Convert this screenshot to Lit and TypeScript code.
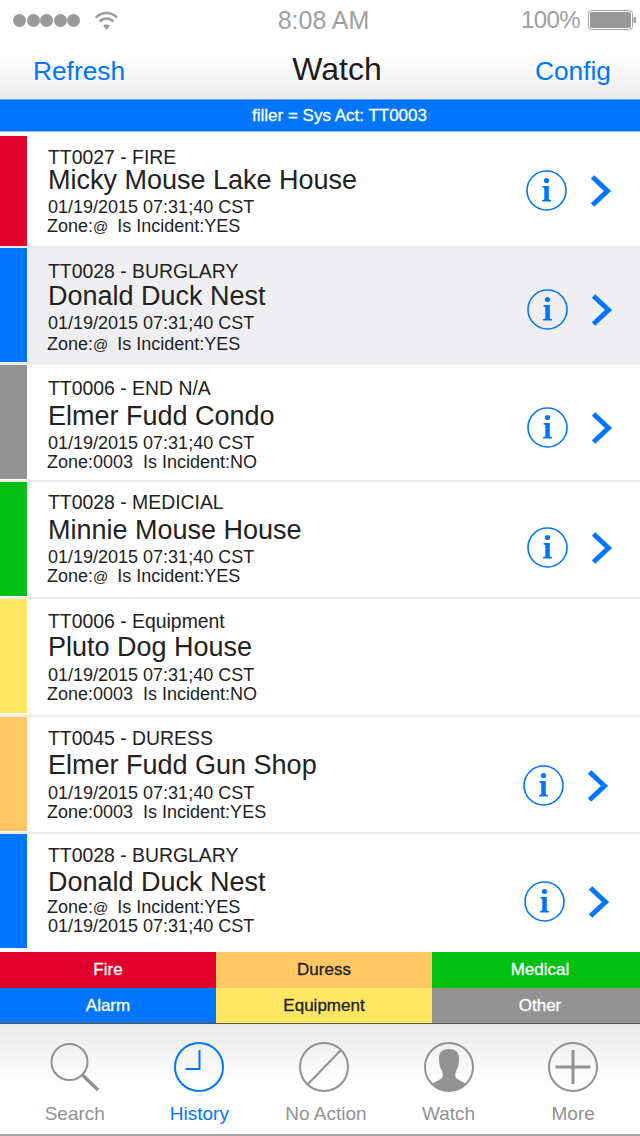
import { LitElement, css, html, nothing, svg } from 'lit';
import { customElement } from 'lit/decorators.js';

interface Ticket {
  color: string;
  height: number;
  head: string;
  name: string;
  lines: string[];
  // vertical centre of each text line, measured from the top of the row
  ys: number[];
  iconX?: number;
  iconY?: number;
  barTop?: number;
  barBottom?: number;
  shade?: boolean;
}

const STAMP = '01/19/2015 07:31;40 CST';
const SMALL_LINE = 18;
const NAME_LINE = 26;
const TEXT_RIGHT = 479;

const TICKETS: Ticket[] = [
  { color: '#e0002b', height: 116, barTop: 4, barBottom: 0, head: 'TT0027 - FIRE', name: 'Micky Mouse Lake House', lines: [STAMP, 'Zone:@  Is Incident:YES'], ys: [25, 48, 75, 94], iconX: 526, iconY: 38 },
  { color: '#0076ff', height: 117, head: 'TT0028 - BURGLARY', name: 'Donald Duck Nest', lines: [STAMP, 'Zone:@  Is Incident:YES'], ys: [23, 48, 75, 96], iconX: 527, iconY: 41, shade: true },
  { color: '#939393', height: 117, head: 'TT0006 - END N/A', name: 'Elmer Fudd Condo', lines: [STAMP, 'Zone:0003  Is Incident:NO'], ys: [23, 51, 78, 97], iconX: 527, iconY: 42 },
  { color: '#00bf13', height: 117, head: 'TT0028 - MEDICIAL', name: 'Minnie Mouse House', lines: [STAMP, 'Zone:@  Is Incident:YES'], ys: [20, 48, 75, 94], iconX: 527, iconY: 45 },
  { color: '#ffe763', height: 118, barBottom: 2, head: 'TT0006 - Equipment', name: 'Pluto Dog House', lines: [STAMP, 'Zone:0003  Is Incident:NO'], ys: [22, 48, 76, 95] },
  { color: '#ffc764', height: 117, head: 'TT0045 - DURESS', name: 'Elmer Fudd Gun Shop', lines: [STAMP, 'Zone:0003  Is Incident:YES'], ys: [21, 48, 76, 95], iconX: 523, iconY: 48 },
  { color: '#0076ff', height: 118, barBottom: 4, head: 'TT0028 - BURGLARY', name: 'Donald Duck Nest', lines: ['Zone:@  Is Incident:YES', STAMP], ys: [21, 48, 73, 92], iconX: 524, iconY: 47 },
];

const LEGEND = [
  { label: 'Fire', bg: '#e0002b', fg: '#fff' },
  { label: 'Duress', bg: '#ffc764', fg: '#222' },
  { label: 'Medical', bg: '#00bf13', fg: '#fff' },
  { label: 'Alarm', bg: '#0076ff', fg: '#fff' },
  { label: 'Equipment', bg: '#ffe763', fg: '#222' },
  { label: 'Other', bg: '#939393', fg: '#fff' },
];

const TAB_ICONS = {
  search: svg`<circle cx="19.5" cy="20" r="18" /><path d="M32.5 33 L48 48" stroke-width="3.5" />`,
  clock: svg`<circle cx="25" cy="25" r="24" /><path d="M25.5 8 V27 H11.5" />`,
  ban: svg`<circle cx="25" cy="25" r="24" /><path d="M9 42 L42 8" />`,
  person: svg`<circle cx="25" cy="25" r="24" />
    <path fill="currentColor" stroke="none" d="M25 7 C31 7 35 10 35 16 C35 22 34 26 32 29 C31 32 31 34 32 36 C34 38 38 39 42 42 C38 47 32 49 25 49 C18 49 12 47 8 42 C12 39 16 38 18 36 C19 34 19 32 18 29 C16 26 15 22 15 16 C15 10 19 7 25 7 Z" />`,
  plus: svg`<circle cx="25" cy="25" r="24" /><path d="M25 8 V42 M7.5 25 H42.5" stroke-width="3" />`,
};

const TABS: { label: string; icon: keyof typeof TAB_ICONS; active?: boolean; nudge?: boolean }[] = [
  { label: 'Search', icon: 'search' },
  { label: 'History', icon: 'clock', active: true },
  { label: 'No Action', icon: 'ban', nudge: true },
  { label: 'Watch', icon: 'person' },
  { label: 'More', icon: 'plus' },
];

@customElement('app-root')
export class AppRoot extends LitElement {
  static styles = css`
    :host {
      display: block;
      width: 640px;
      height: 1136px;
      overflow: hidden;
      background: #fff;
      font-family: 'Liberation Sans', Arial, sans-serif;
      color: #222;
    }
    .top {
      height: 99px;
      background: linear-gradient(#fff 0, #fff 58px, #ebebeb 98px);
      display: flex;
      flex-direction: column;
    }
    .status {
      height: 40px;
      display: grid;
      grid-template-columns: 1fr auto 1fr;
      align-items: center;
      color: #a0a0a0;
      font-size: 25px;
    }
    .signal {
      display: flex;
      align-items: center;
      gap: 0.5px;
      padding-left: 13px;
    }
    .dot {
      width: 13px;
      height: 13px;
      border-radius: 50%;
      background: #999;
    }
    .wifi {
      margin-left: 14px;
    }
    .clock {
      margin-left: 7px;
    }
    .power {
      display: flex;
      justify-content: flex-end;
      align-items: center;
      gap: 8px;
      padding-right: 4px;
      font-size: 24px;
      letter-spacing: -0.6px;
    }
    .nav {
      flex: 1;
      display: grid;
      grid-template-columns: 1fr auto 1fr;
      align-items: center;
      padding: 3px 29px 0 33px;
      color: #0076ff;
      font-size: 26.3px;
    }
    .nav .title {
      margin: -3px 0 0 30px;
      color: #1c1c1c;
      font-size: 32px;
    }
    .nav .right {
      text-align: right;
    }
    .banner {
      border-top: 1px solid #58a5ff;
      border-bottom: 1px solid #8cc1ff;
      background: #0076ff;
      color: #fff;
      font-size: 17px;
      line-height: 31px;
      text-align: center;
      padding-left: 39px;
      -webkit-text-stroke: 0.3px #fff;
    }
    .row {
      display: flex;
      box-sizing: border-box;
      border-bottom: 2px solid #ebebeb;
      background: #fff;
    }
    .row.last {
      border-bottom: 0;
    }
    .row.shade {
      background: #efeff1;
    }
    .swatch {
      width: 27px;
      flex: none;
    }
    .text {
      width: 452px;
      flex: none;
      padding-left: 21px;
      box-sizing: border-box;
    }
    .line {
      white-space: pre;
      font-size: 18px;
      line-height: 18px;
      height: 18px;
    }
    .line.head {
      font-size: 19.4px;
    }
    .line.name {
      font-size: 27px;
      line-height: 26px;
      height: 26px;
    }
    .line.zone {
      margin-left: -1px;
    }
    .at {
      font-size: 15px;
      letter-spacing: -1px;
    }
    .actions {
      display: flex;
      align-items: center;
      gap: 23px;
      align-self: flex-start;
    }
    .info {
      width: 41px;
      height: 41px;
      display: block;
    }
    .chev {
      width: 22px;
      height: 32px;
      display: block;
    }
    .legend {
      height: 71px;
      display: grid;
      grid-template-columns: repeat(3, 216px);
      grid-template-rows: 36px 35px;
      font-size: 17px;
      -webkit-text-stroke: 0.3px currentColor;
    }
    .legend div {
      display: flex;
      align-items: center;
      justify-content: center;
    }
    .tabs {
      height: 113px;
      box-sizing: border-box;
      border-top: 1px solid #555;
      border-bottom: 2px solid #a5a5a5;
      background: linear-gradient(#e9e9e9 0, #fff 60px);
      display: grid;
      grid-template-columns: repeat(5, 124.6px);
      padding: 18px 0 0 12.5px;
    }
    .tab {
      display: flex;
      flex-direction: column;
      align-items: center;
      gap: 11px;
      color: #929292;
      font-size: 19px;
      white-space: nowrap;
    }
    .tab.active {
      color: #0076ff;
    }
    .tab.nudge span {
      margin-left: 4px;
    }
    .tab svg {
      width: 50px;
      height: 50px;
      fill: none;
      stroke: currentColor;
      stroke-width: 2;
      overflow: visible;
    }
  `;

  private detail(text: string) {
    const [before, after] = text.split('@');
    return after === undefined ? text : html`${before}<span class="at">@</span>${after}`;
  }

  private renderLines(t: Ticket) {
    const zoneCls = (s: string) => (s.startsWith('Zone') ? 'zone' : '');
    const rows = [
      { cls: 'head', h: SMALL_LINE, body: t.head as unknown },
      { cls: 'name', h: NAME_LINE, body: t.name as unknown },
      { cls: zoneCls(t.lines[0]), h: SMALL_LINE, body: this.detail(t.lines[0]) as unknown },
      { cls: zoneCls(t.lines[1]), h: SMALL_LINE, body: this.detail(t.lines[1]) as unknown },
    ];
    let bottom = 0;
    return rows.map((r, i) => {
      const gap = t.ys[i] - r.h / 2 - bottom;
      bottom = t.ys[i] + r.h / 2;
      return html`<div class="line ${r.cls}" style="margin-top:${gap}px">${r.body}</div>`;
    });
  }

  private renderRow(t: Ticket, i: number) {
    const last = i === TICKETS.length - 1;
    return html`
      <div class="row ${last ? 'last' : ''} ${t.shade ? 'shade' : ''}" style="height:${t.height}px">
        <div class="swatch" style="background:${t.color};margin:${t.barTop ?? 0}px 0 ${t.barBottom ?? 1}px"></div>
        <div class="text">${this.renderLines(t)}</div>
        ${t.iconX === undefined
          ? nothing
          : html`<div class="actions" style="margin:${t.iconY}px 0 0 ${t.iconX - TEXT_RIGHT}px">
              <svg class="info" viewBox="0 0 41 41">
                <circle cx="20.5" cy="20.5" r="19.5" fill="none" stroke="#0076ff" stroke-width="1.6" />
                <circle cx="20.5" cy="10.5" r="2.6" fill="#0076ff" />
                <path fill="#0076ff" d="M16.5 16 H22.8 V29 Q22.8 30 25 30 V31.5 H16 V30 Q18.3 30 18.3 29 V18.5 Q18.3 17.5 16.5 17.5 Z" />
              </svg>
              <svg class="chev" viewBox="0 0 22 32">
                <path fill="none" stroke="#0076ff" stroke-width="5" d="M2.5 2 L17.5 16 L2.5 30" />
              </svg>
            </div>`}
      </div>
    `;
  }

  render() {
    return html`
      <div class="top">
        <div class="status">
          <div class="signal">
            ${[0, 1, 2, 3, 4].map(() => html`<span class="dot"></span>`)}
            <svg class="wifi" width="23" height="19" viewBox="0 0 23 19" fill="none" stroke="#a0a0a0" stroke-width="2.6">
              <path d="M1 6.5 C7 0.5 16 0.5 22 6.5" />
              <path d="M4.5 10.5 C8.5 6.5 14.5 6.5 18.5 10.5" />
              <path d="M11.5 19 L8 14.6 C10 13.2 13 13.2 15 14.6 Z" fill="#a0a0a0" stroke="none" />
            </svg>
          </div>
          <div class="clock">8:08 AM</div>
          <div class="power">
            <span>100%</span>
            <svg width="48" height="20" viewBox="0 0 48 20">
              <rect x="0.5" y="0.5" width="44" height="19" rx="3" fill="none" stroke="#a0a0a0" />
              <rect x="2" y="2" width="41" height="16" rx="1.5" fill="#999" />
              <rect x="45.5" y="7" width="2.5" height="6" rx="1" fill="#a0a0a0" />
            </svg>
          </div>
        </div>
        <div class="nav">
          <span>Refresh</span>
          <span class="title">Watch</span>
          <span class="right">Config</span>
        </div>
      </div>
      <div class="banner">filler = Sys Act: TT0003</div>
      ${TICKETS.map((t, i) => this.renderRow(t, i))}
      <div class="legend">
        ${LEGEND.map((l) => html`<div style="background:${l.bg};color:${l.fg}">${l.label}</div>`)}
      </div>
      <div class="tabs">
        ${TABS.map(
          (t) => html`<div class="tab ${t.active ? 'active' : ''} ${t.nudge ? 'nudge' : ''}">
            <svg viewBox="0 0 50 50">${TAB_ICONS[t.icon]}</svg>
            <span>${t.label}</span>
          </div>`,
        )}
      </div>
    `;
  }
}
